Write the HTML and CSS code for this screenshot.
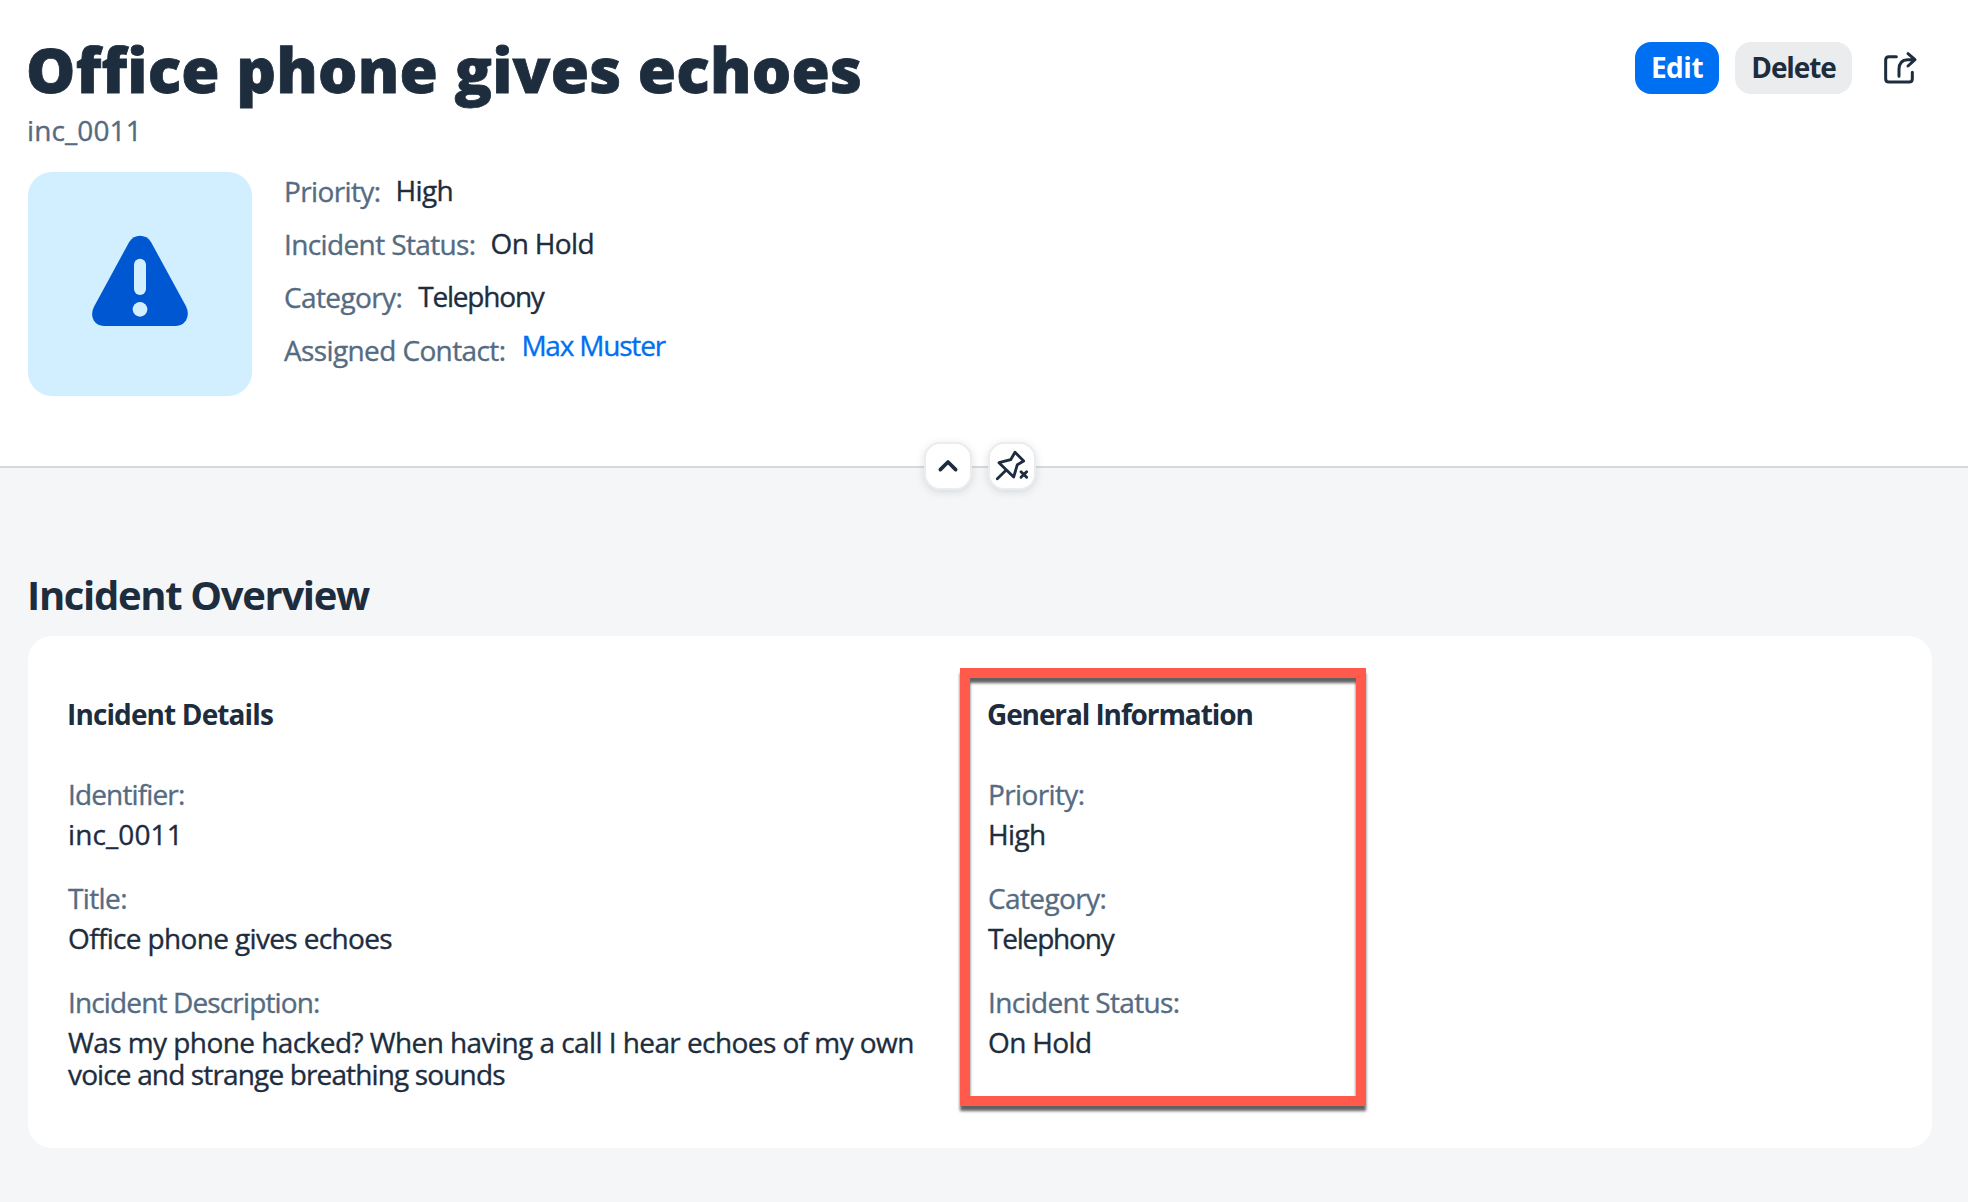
FILE: index.html
```html
<!DOCTYPE html>
<html lang="en">
<head>
<meta charset="utf-8">
<title>Office phone gives echoes</title>
<link rel="stylesheet" href="styles.css">
</head>
<body>
<header class="header">
  <div class="title-row">
    <h1 class="title">Office phone gives echoes</h1>
    <div class="actions">
      <button class="btn btn-edit">Edit</button>
      <button class="btn btn-delete">Delete</button>
      <button class="btn btn-share" aria-label="Share">
        <svg width="50" height="48" viewBox="0 0 150 144" fill="none" stroke="#1d2d3e" stroke-width="9" stroke-linecap="round" stroke-linejoin="round"><path d="M64 38H42Q32 38 32 48V104Q32 114 42 114H102Q112 114 112 104V85"/><path d="M72 97V76Q72 48 98 47H119M99 29L120 47L99 66"/></svg>
      </button>
    </div>
  </div>
  <p class="subtitle">inc_0011</p>
  <div class="header-content">
    <div class="avatar">
      <svg width="110" height="106" viewBox="0 0 330 318"><path fill="#0057d2" d="M133 41Q145 23 165 23Q186 23 198 42L303 235Q314 258 303 277Q293 294 272 294H57Q36 294 26 277Q16 257 27 236Z"/><rect x="147" y="92" width="36" height="109" rx="18" fill="#d1efff"/><circle cx="165" cy="244" r="22" fill="#d1efff"/></svg>
    </div>
    <dl class="facts">
      <div class="fact"><dt>Priority:</dt><dd class="tight">High</dd></div>
      <div class="fact"><dt>Incident Status:</dt><dd class="tight">On Hold</dd></div>
      <div class="fact"><dt>Category:</dt><dd class="tighter">Telephony</dd></div>
      <div class="fact"><dt>Assigned Contact:</dt><dd class="tighter link">Max Muster</dd></div>
    </dl>
  </div>
  <div class="header-toggles">
    <button class="toggle" aria-label="Collapse header"><svg width="48" height="48" viewBox="27 21 144 144" fill="none" stroke="#1d2d3e" stroke-width="11" stroke-linecap="round" stroke-linejoin="round"><path d="M76 104L99 81L122 104"/></svg></button>
    <button class="toggle" aria-label="Unpin header"><svg width="48" height="48" viewBox="219 21 144 144" fill="none" stroke="#1d2d3e" stroke-width="8.5" stroke-linecap="round" stroke-linejoin="round"><path d="M300 52L326 78L307 89L296 126L252 83L287 74ZM273 106L247 131"/><path d="M318 110L335 127M335 110L318 127"/></svg></button>
  </div>
</header>
<main class="content">
  <h2 class="section-title">Incident Overview</h2>
  <section class="card">
    <div class="column">
      <h3 class="group-title">Incident Details</h3>
      <dl class="fields">
        <div class="field"><dt class="snug">Identifier:</dt><dd class="digits">inc_0011</dd></div>
        <div class="field"><dt>Title:</dt><dd class="tight">Office phone gives echoes</dd></div>
        <div class="field"><dt class="snug">Incident Description:</dt><dd>Was my phone hacked? When having a call I hear echoes of my own <span class="snug">voice and strange breathing sounds</span></dd></div>
      </dl>
    </div>
    <div class="column">
      <h3 class="group-title group-title-wide">General Information</h3>
      <dl class="fields">
        <div class="field"><dt>Priority:</dt><dd class="tight">High</dd></div>
        <div class="field"><dt>Category:</dt><dd class="tighter">Telephony</dd></div>
        <div class="field"><dt>Incident Status:</dt><dd class="tight">On Hold</dd></div>
      </dl>
    </div>
    <div class="highlight"></div>
  </section>
</main>
</body>
</html>
```
FILE: styles.css
```css
* { box-sizing: border-box; margin: 0; padding: 0; }

body {
  min-height: 1202px;
  background: #f5f6f7;
  color: #1d2d3e;
  font: 400 28px/32px "Open Sans", "Noto Sans", sans-serif;
}

.header {
  position: relative;
  height: 468px;
  padding: 29px 36px 0 28px;
  background: #fff;
  border-bottom: 2px solid #d9d9d9;
}

.title-row { display: flex; justify-content: space-between; align-items: flex-start; }
.title { margin-left: -2px; font-size: 62px; font-weight: 800; line-height: 80px; letter-spacing: 0.22px; white-space: nowrap; -webkit-text-stroke: 0.8px #1d2d3e; }

.actions { display: flex; gap: 16px; margin-top: 13px; }
.btn {
  display: flex;
  align-items: center;
  justify-content: center;
  height: 52px;
  border: 0;
  border-radius: 16px;
  font: 700 28px/32px "Open Sans", "Noto Sans", sans-serif;
  color: #1d2d3e;
}
.btn-edit { width: 84px; padding-bottom: 3px; background: #0070f2; color: #fff; letter-spacing: -0.48px; }
.btn-delete { width: 117px; padding-bottom: 3px; background: #eaecee; letter-spacing: -1.1px; }
.btn-share { width: 64px; background: transparent; }

.subtitle { margin: 5px 0 26px -1px; color: #556b82; letter-spacing: 0.1px; }
.subtitle, dt, dd { -webkit-text-stroke: 0.35px currentColor; }

.header-content { display: flex; gap: 32px; }
.avatar {
  display: flex;
  align-items: center;
  justify-content: center;
  width: 224px;
  height: 224px;
  padding-bottom: 6px;
  border-radius: 24px;
  background: #d1efff;
}

.facts { display: flex; flex-direction: column; gap: 21px; padding-top: 3px; }
.fact { display: flex; align-items: flex-start; gap: 15px; height: 32px; }
.fact dd { margin-top: -1px; }
.fact dd.tighter { margin-left: 1px; }
.fact dd.link { margin-top: -5px; color: #0070f2; }

dt { color: #556b82; letter-spacing: -0.62px; }
.tight { letter-spacing: -0.65px; }
.tighter { letter-spacing: -1.2px; }
.snug { letter-spacing: -0.86px; }

.header-toggles { position: absolute; left: 924px; top: 442px; display: flex; gap: 16px; }
.toggle {
  width: 48px;
  height: 48px;
  border: 2px solid #eaecee;
  border-radius: 16px;
  background: #fff;
  box-shadow: 0 2px 8px rgba(34, 53, 72, 0.15);
}
.toggle svg { display: block; margin: -2px; }

.content { padding: 100px 36px 0 28px; }
.section-title { margin: 0 0 14px -1px; font-size: 40px; line-height: 54px; letter-spacing: -1.33px; }

.card {
  position: relative;
  display: grid;
  grid-template-columns: 920px 920px;
  height: 512px;
  padding: 62px 0 0 40px;
  border-radius: 24px;
  background: #fff;
}
.group-title { margin: 0 0 48px -1px; font-size: 28px; line-height: 32px; letter-spacing: -0.88px; }
.group-title-wide { letter-spacing: -1.1px; }
.fields { display: flex; flex-direction: column; gap: 32px; }
.field { display: flex; flex-direction: column; gap: 8px; }
.field dd { width: 860px; letter-spacing: -0.57px; }
.field dd.tight { letter-spacing: -0.65px; }
.field dd.tighter { letter-spacing: -1.2px; }
.field dd.digits { letter-spacing: 0.1px; }

/* callout frame drawn over the right-hand group */
.highlight {
  position: absolute;
  left: 932px;
  top: 32px;
  width: 406px;
  height: 438px;
  border: 10px solid #ff5a4c;
  filter: drop-shadow(0 5px 1.5px rgba(0, 0, 0, 0.62));
}
```
